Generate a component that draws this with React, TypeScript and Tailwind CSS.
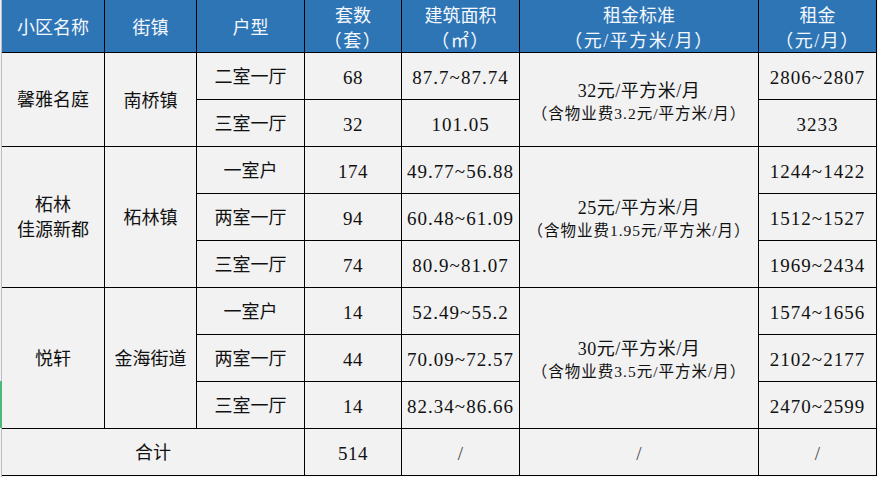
import React from 'react';

const font = "font-['Liberation_Serif','Noto_Sans_CJK_SC',serif]";

type Unit = { type: string; count: string; area: string; rent: string };
type Estate = { name: string[]; town: string; std: string; note: string; units: Unit[] };

const estates: Estate[] = [
  {
    name: ['馨雅名庭'],
    town: '南桥镇',
    std: '32元/平方米/月',
    note: '（含物业费3.2元/平方米/月）',
    units: [
      { type: '二室一厅', count: '68', area: '87.7~87.74', rent: '2806~2807' },
      { type: '三室一厅', count: '32', area: '101.05', rent: '3233' },
    ],
  },
  {
    name: ['柘林', '佳源新都'],
    town: '柘林镇',
    std: '25元/平方米/月',
    note: '（含物业费1.95元/平方米/月）',
    units: [
      { type: '一室户', count: '174', area: '49.77~56.88', rent: '1244~1422' },
      { type: '两室一厅', count: '94', area: '60.48~61.09', rent: '1512~1527' },
      { type: '三室一厅', count: '74', area: '80.9~81.07', rent: '1969~2434' },
    ],
  },
  {
    name: ['悦轩'],
    town: '金海街道',
    std: '30元/平方米/月',
    note: '（含物业费3.5元/平方米/月）',
    units: [
      { type: '一室户', count: '14', area: '52.49~55.2', rent: '1574~1656' },
      { type: '两室一厅', count: '44', area: '70.09~72.57', rent: '2102~2177' },
      { type: '三室一厅', count: '14', area: '82.34~86.66', rent: '2470~2599' },
    ],
  },
];

const span: Record<number, string> = { 2: 'row-span-2', 3: 'row-span-3' };

function Head({ lines }: { lines: string[] }) {
  return (
    <div className="bg-[#2e75b6] text-[#f4f8fd] text-[18px] leading-[25px] pt-[5px] flex flex-col items-center justify-center">
      {lines.map((l, i) => (
        <span key={i} className={i > 0 ? 'tracking-[1.5px]' : ''}>
          {l}
        </span>
      ))}
    </div>
  );
}

function Cell({ children, className = '' }: { children: React.ReactNode; className?: string }) {
  return (
    <div className={`bg-[#f2f2f2] text-[#111] flex flex-col items-center justify-center ${className}`}>
      {children}
    </div>
  );
}

export default function App() {
  return (
    <div
      className={`w-[878px] h-[477px] bg-[#f7f7f7] flex relative ${font} [text-spacing-trim:space-all]`}
    >
      <div className="w-px bg-[#f2f2f2]" />
      <div className="w-px h-full bg-[#b9bdc9]" />
      <div className="self-start border-r border-b border-black">
        <div className="grid grid-cols-[102px_91px_107px_96px_117px_238px_117px] grid-rows-[52px_repeat(9,46px)] gap-px bg-black">
          <Head lines={['小区名称']} />
          <Head lines={['街镇']} />
          <Head lines={['户型']} />
          <Head lines={['套数', '（套）']} />
          <Head lines={['建筑面积', '（㎡）']} />
          <Head lines={['租金标准', '（元/平方米/月）']} />
          <Head lines={['租金', '（元/月）']} />

          {estates.map((e) =>
            e.units.map((u, i) => (
              <React.Fragment key={e.town + i}>
                {i === 0 && (
                  <Cell className={`${span[e.units.length]} text-[18px] leading-[25px] pt-[2px]`}>
                    {e.name.map((n) => (
                      <span key={n}>{n}</span>
                    ))}
                  </Cell>
                )}
                {i === 0 && (
                  <Cell className={`${span[e.units.length]} text-[18px] pt-[3px]`}>{e.town}</Cell>
                )}
                <Cell className="text-[18px] pt-[3px]">{u.type}</Cell>
                <Cell className="text-[19px] tracking-[0.5px] pt-[4px]">{u.count}</Cell>
                <Cell className="text-[19px] tracking-[1px] pt-[4px]">{u.area}</Cell>
                {i === 0 && (
                  <Cell className={`${span[e.units.length]} pt-[5px]`}>
                    <span className="text-[18px] leading-[23px] tracking-[0.5px]">{e.std}</span>
                    <span className="text-[15.5px] leading-[22px] tracking-[1px]">{e.note}</span>
                  </Cell>
                )}
                <Cell className="text-[19px] tracking-[1px] pt-[4px]">{u.rent}</Cell>
              </React.Fragment>
            ))
          )}

          <Cell className="col-span-3 text-[18px] pt-[3px]">合计</Cell>
          <Cell className="text-[19px] tracking-[0.5px] pt-[4px]">514</Cell>
          <Cell className="text-[19px] text-[#444] pt-[4px]">/</Cell>
          <Cell className="text-[19px] text-[#444] pt-[4px]">/</Cell>
          <Cell className="text-[19px] text-[#444] pt-[4px]">/</Cell>
        </div>
      </div>
      <div className="absolute left-0 top-[381px] w-[2px] h-[47px] bg-[#4cb87a]" />
    </div>
  );
}
